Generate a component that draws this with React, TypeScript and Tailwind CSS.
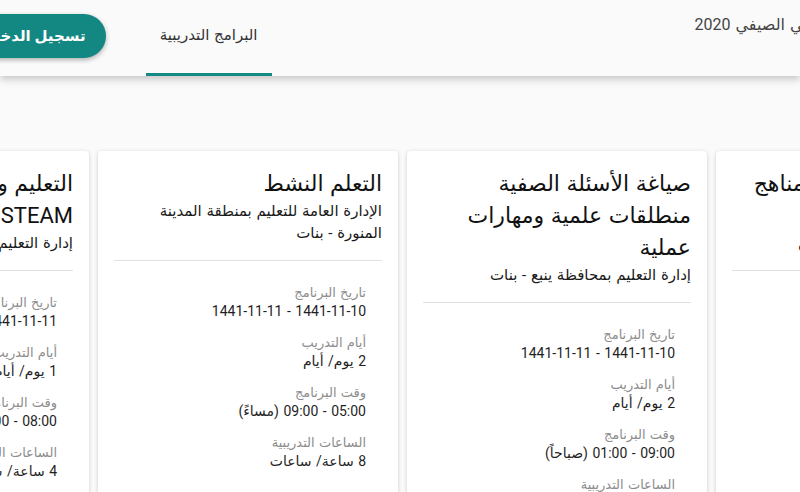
import React from 'react';

interface Program {
  title: string;
  org: string;
  date: string;
  days: string;
  time: string;
  hours: string;
}

const programs: Program[] = [
  {
    title: 'تصميم الأنشطة في المناهج الدراسية',
    org: 'إدارة التعليم بمحافظة جدة - بنين',
    date: '1441-11-12 - 1441-11-13',
    days: '2 يوم/ أيام',
    time: '08:00 - 12:00 (صباحاً)',
    hours: '8 ساعة/ ساعات',
  },
  {
    title: 'صياغة الأسئلة الصفية منطلقات علمية ومهارات عملية',
    org: 'إدارة التعليم بمحافظة ينبع - بنات',
    date: '1441-11-10 - 1441-11-11',
    days: '2 يوم/ أيام',
    time: '09:00 - 01:00 (صباحاً)',
    hours: '8 ساعة/ ساعات',
  },
  {
    title: 'التعلم النشط',
    org: 'الإدارة العامة للتعليم بمنطقة المدينة المنورة - بنات',
    date: '1441-11-10 - 1441-11-11',
    days: '2 يوم/ أيام',
    time: '05:00 - 09:00 (مساءً)',
    hours: '8 ساعة/ ساعات',
  },
  {
    title: 'التعليم والتعلم وفق منحى STEAM',
    org: 'إدارة التعليم بمحافظة الطائف - بنات',
    date: '1441-11-11 - 1441-11-11',
    days: '1 يوم/ أيام',
    time: '08:00 - 12:00 (صباحاً)',
    hours: '4 ساعة/ ساعات',
  },
];

const Field: React.FC<{ label: string; value: string }> = ({ label, value }) => (
  <div className="mb-[14px]">
    <div className="text-[13px] leading-[16px] text-[#8d8d8d]">{label}</div>
    <div className="text-[14px] leading-[20px] text-[#1f1f1f]">{value}</div>
  </div>
);

const ProgramCard: React.FC<{ p: Program }> = ({ p }) => (
  <div className="w-[300px] shrink-0 bg-white rounded-[4px] shadow-[0_1px_4px_rgba(0,0,0,0.18)] px-4 pt-[17px] min-h-[400px]">
    <h2 className="text-[22px] leading-[32px] text-[#111] font-normal">{p.title}</h2>
    <p className="text-[15px] leading-[22px] text-[#1a1a1a]">{p.org}</p>
    <div className="mt-4 border-t border-[#e0e0e0]" />
    <div className="px-4 pt-6">
      <Field label="تاريخ البرنامج" value={p.date} />
      <Field label="أيام التدريب" value={p.days} />
      <Field label="وقت البرنامج" value={p.time} />
      <Field label="الساعات التدريبية" value={p.hours} />
    </div>
  </div>
);

export default function App() {
  return (
    <div dir="rtl" className="w-[800px] h-[492px] overflow-hidden bg-[#fafafa] font-['Roboto','DejaVu_Sans',sans-serif] [word-spacing:1px]">
      <header className="relative z-10 h-[76px] bg-[#fafafa] shadow-[0_3px_8px_rgba(0,0,0,0.22)]">
        <div className="flex h-full w-[1000px] mr-[-142px]">
          <div className="self-start mt-[13px] pr-[43px] text-[16px] leading-[24px] text-[#444]">
            البرنامج التدريبي الصيفي 2020
          </div>
          <div className="flex-1" />
          <div className="relative flex w-[126px] items-center justify-center pb-[6px] text-[15px] text-[#333]">
            البرامج التدريبية
            <span className="absolute bottom-0 left-0 right-0 h-[3px] bg-[#148a84]" />
          </div>
          <button className="self-start mt-[14px] mr-[40px] ml-[16px] h-[44px] rounded-full bg-[#138782] px-5 text-[15px] font-bold text-white shadow-[0_2px_5px_rgba(0,0,0,0.3)]">
            تسجيل الدخول
          </button>
        </div>
      </header>
      <main className="pt-[75px]">
        <div className="flex gap-[9px] mr-[-216px]">
          {programs.map((p) => (
            <ProgramCard key={p.title} p={p} />
          ))}
        </div>
      </main>
    </div>
  );
}
